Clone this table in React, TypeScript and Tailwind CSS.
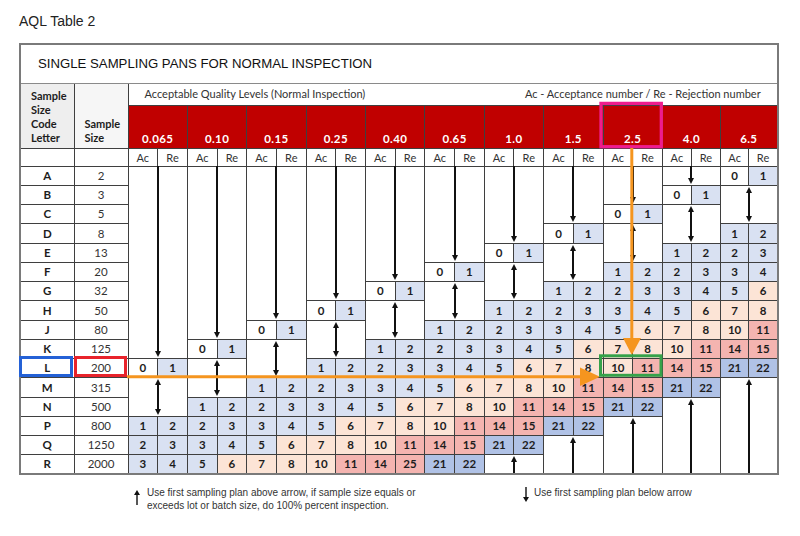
import React from 'react'

const CODES = ['A', 'B', 'C', 'D', 'E', 'F', 'G', 'H', 'J', 'K', 'L', 'M', 'N', 'P', 'Q', 'R']
const SIZES = [2, 3, 5, 8, 13, 20, 32, 50, 80, 125, 200, 315, 500, 800, 1250, 2000]
const AQLS = ['0.065', '0.10', '0.15', '0.25', '0.40', '0.65', '1.0', '1.5', '2.5', '4.0', '6.5']
const STEPS: [number, number][] = [[1, 2], [2, 3], [3, 4], [5, 6], [7, 8], [10, 11], [14, 15], [21, 22]]

type Cell =
  | { t: 'num'; ac: number; re: number }
  | { t: 'arrow'; dir: 'up' | 'down' | 'updown'; span: number }
  | { t: 'skip' }

// each AQL column starts with 0/1 one row higher than the column before it
function cellFor(col: number, row: number): Cell {
  const s = 10 - col
  if (row < s) return row === 0 ? { t: 'arrow', dir: 'down', span: s } : { t: 'skip' }
  if (row === s) return { t: 'num', ac: 0, re: 1 }
  if (row === s + 1) return { t: 'arrow', dir: 'updown', span: 2 }
  if (row === s + 2) return { t: 'skip' }
  const k = row - s - 3
  if (k < STEPS.length) {
    if (col === 4 && row === 15) return { t: 'num', ac: 14, re: 25 } // as printed in the chart
    return { t: 'num', ac: STEPS[k][0], re: STEPS[k][1] }
  }
  if (k === STEPS.length) return { t: 'arrow', dir: 'up', span: 16 - row }
  return { t: 'skip' }
}

const tone = (v: number) =>
  v === 0 ? 'bg-white' : v <= 5 ? 'bg-[#d9e1f2]' : v <= 10 ? 'bg-[#fce4d6]' : v <= 15 || v === 25 ? 'bg-[#f4b4b0]' : 'bg-[#b0c2e6]'

const bd = 'border border-[#3f3f3f] p-0'

function Head({ up }: { up?: boolean }) {
  return (
    <svg width="6" height="6" viewBox="0 0 6 6" className="shrink-0">
      <path d={up ? 'M3 0L6 6H0Z' : 'M0 0H6L3 6Z'} fill="#111" />
    </svg>
  )
}

function Arrow({ dir }: { dir: 'up' | 'down' | 'updown' }) {
  return (
    <div className={`absolute inset-0 flex flex-col items-center ${dir === 'down' ? 'pb-[1px]' : 'py-[1px]'}`}>
      {dir !== 'down' && <Head up />}
      <div className="flex-1 w-[2px] bg-[#111] -my-[1px]" />
      {dir !== 'up' && <Head />}
    </div>
  )
}

const COLW = [
  'w-[54px]', 'w-[54px]',
  ...Array(18).fill('w-[29.7px]'),
  'w-[29px]', 'w-[29px]', 'w-[28.5px]', 'w-[28.5px]',
]

export default function App() {
  return (
    <div className="w-[800px] h-[536px] bg-white text-[#1d1d1d] font-['Lato','Noto_Sans',sans-serif]">
      <div className="h-[43px] pl-[19px] pt-[13px] font-['Liberation_Sans',Arial,sans-serif] text-[14px] leading-[17px] text-[#222]">
        AQL Table 2
      </div>

      <div className="relative ml-[19px] w-[758px]">
        <table className="w-full table-fixed border-collapse border-2 border-[#7a7a7a]">
          <colgroup>
            {COLW.map((w, i) => <col key={i} className={w} />)}
          </colgroup>
          <tbody>
            <tr className="h-[39px]">
              <td colSpan={24} className="border border-[#8a8a8a] pl-[17px] font-['Liberation_Sans',Arial,sans-serif] text-[13.2px] text-[#111]">
                SINGLE SAMPLING PANS FOR NORMAL INSPECTION
              </td>
            </tr>
            <tr className="h-[22px]">
              <td rowSpan={2} className={`${bd} bg-[#eeeeee] align-bottom pl-[10px] pb-[3px] font-bold text-[11px] leading-[14px]`}>
                Sample Size Code Letter
              </td>
              <td rowSpan={2} className={`${bd} bg-[#f6f6f6] align-bottom pl-[10px] pb-[3px] font-bold text-[11px] leading-[14px]`}>
                Sample Size
              </td>
              <td colSpan={22} className="border border-[#3f3f3f] border-b-0 px-[16px] text-[11px] text-[#333]">
                <div className="flex justify-between">
                  <span>Acceptable Quality Levels (Normal Inspection)</span>
                  <span>Ac - Acceptance number / Re - Rejection number</span>
                </div>
              </td>
            </tr>
            <tr className="h-[43px]">
              {AQLS.map(a => (
                <td key={a} colSpan={2} className={`${bd} bg-[#c00000] align-bottom text-center pb-[3px] text-white font-bold text-[11.5px] leading-none tracking-[0.4px]`}>
                  {a}
                </td>
              ))}
            </tr>
            <tr className="h-[18px]">
              <td className={bd} />
              <td className={bd} />
              {AQLS.map(a => (
                <React.Fragment key={a}>
                  <td className={`${bd} text-center text-[11px] leading-none text-[#333]`}>Ac</td>
                  <td className={`${bd} text-center text-[11px] leading-none text-[#333]`}>Re</td>
                </React.Fragment>
              ))}
            </tr>
            {CODES.map((code, r) => (
              <tr key={code} className="h-[19.25px]">
                <td className={`${bd} text-center font-bold text-[11.5px] leading-none`}>{code}</td>
                <td className={`${bd} text-center text-[11.5px] leading-none text-[#333]`}>{SIZES[r]}</td>
                {AQLS.map((a, c) => {
                  const cell = cellFor(c, r)
                  if (cell.t === 'skip') return null
                  if (cell.t === 'arrow')
                    return (
                      <td key={a} colSpan={2} rowSpan={cell.span} className={`${bd} relative bg-white`}>
                        <Arrow dir={cell.dir} />
                      </td>
                    )
                  return (
                    <React.Fragment key={a}>
                      <td className={`${bd} ${tone(cell.ac)} text-center font-bold text-[11.5px] leading-none`}>{cell.ac}</td>
                      <td className={`${bd} ${tone(cell.re)} text-center font-bold text-[11.5px] leading-none`}>{cell.re}</td>
                    </React.Fragment>
                  )
                })}
              </tr>
            ))}
          </tbody>
        </table>

        {/* highlight marks drawn over the chart, in page coordinates */}
        <svg className="absolute left-0 top-0 pointer-events-none" width={758} height={432} viewBox="19 43 758 432">
          <rect x={601} y={103.4} width={60.3} height={43.3} fill="none" stroke="#ee1c8d" strokeWidth={3.3} />
          <rect x={20.5} y={357.5} width={51} height={18} fill="none" stroke="#2461d6" strokeWidth={3} />
          <rect x={75.5} y={357.5} width={50} height={18} fill="none" stroke="#e8232b" strokeWidth={3} />
          <line x1={631.8} y1={148} x2={631.8} y2={340} stroke="#f5951f" strokeWidth={3} />
          <polygon points="623,338 641,338 631.8,355" fill="#f5951f" />
          <line x1={127} y1={376.8} x2={583} y2={376.8} stroke="#f5951f" strokeWidth={3} />
          <polygon points="580,367.5 580,386 600,376.8" fill="#f5951f" />
          <rect x={600.5} y={355.8} width={60.5} height={19.5} fill="none" stroke="#35a24a" strokeWidth={3} />
        </svg>
      </div>

      <div className="flex pt-[11px] font-['Liberation_Sans_Narrow','Liberation_Sans',Arial,sans-serif] text-[10px] leading-[13px] text-[#333]">
        <div className="flex gap-[7px] pl-[134px] w-[523px]">
          <svg width="6" height="15" viewBox="0 0 6 15" className="mt-[4px] shrink-0">
            <path d="M3 0L6 5H0Z" fill="#111" />
            <rect x={2.3} y={4} width={1.4} height={11} fill="#111" />
          </svg>
          <p>
            Use first sampling plan above arrow, if sample size equals or
            <br />
            exceeds lot or batch size, do 100% percent inspection.
          </p>
        </div>
        <div className="flex gap-[5px]">
          <svg width="6" height="15" viewBox="0 0 6 15" className="mt-[1px] shrink-0">
            <rect x={2.3} y={0} width={1.4} height={11} fill="#111" />
            <path d="M0 10H6L3 15Z" fill="#111" />
          </svg>
          <p>Use first sampling plan below arrow</p>
        </div>
      </div>
    </div>
  )
}
